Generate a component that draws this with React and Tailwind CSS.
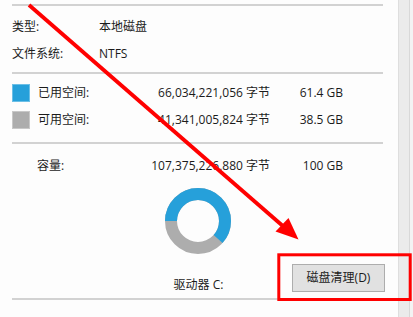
import React from "react";

const font = "font-['Open_Sans','Noto_Sans_CJK_SC',sans-serif]";

function Donut() {
  const r = 27;
  const c = 2 * Math.PI * r;
  const used = 0.614 * c;
  return (
    <svg width="66" height="66" viewBox="0 0 66 66">
      <circle cx="33" cy="33" r={r} fill="none" stroke="#adadad" strokeWidth="12" />
      <circle
        cx="33"
        cy="33"
        r={r}
        fill="none"
        stroke="#26a0da"
        strokeWidth="12"
        strokeDasharray={`${used} ${c}`}
        transform="rotate(180 33 33)"
      />
    </svg>
  );
}

function Sep() {
  return <div className="h-[2px] w-[371px] bg-[#d2d2d2]" />;
}

export default function App() {
  return (
    <div className={`relative w-[413px] h-[317px] overflow-hidden bg-[#fdfdfd] text-[12px] text-[#1b1b1b] ${font} flex`}>
      <div className="w-[398px] pl-[12px] pt-[4px] flex flex-col">
        <Sep />
        <div className="mt-[7px] h-[27px] flex items-center">
          <div className="w-[87px]">类型:</div>
          <div>本地磁盘</div>
        </div>
        <div className="h-[27px] flex items-center">
          <div className="w-[87px]">文件系统:</div>
          <div>NTFS</div>
        </div>
        <div className="mt-[5px]"><Sep /></div>
        <div className="mt-[5px] h-[27px] flex items-center">
          <div className="w-[18px] h-[18px] bg-[#26a0da] border border-[#6cbfe6]" />
          <div className="ml-[8px] w-[102px]">已用空间:</div>
          <div className="w-[130px] text-right whitespace-nowrap">66,034,221,056 字节</div>
          <div className="w-[73px] text-right whitespace-nowrap">61.4 GB</div>
        </div>
        <div className="h-[27px] flex items-center">
          <div className="w-[18px] h-[18px] bg-[#adadad] border border-[#c8c8c8]" />
          <div className="ml-[8px] w-[102px]">可用空间:</div>
          <div className="w-[130px] text-right whitespace-nowrap">41,341,005,824 字节</div>
          <div className="w-[73px] text-right whitespace-nowrap">38.5 GB</div>
        </div>
        <div className="mt-[9px]"><Sep /></div>
        <div className="mt-[8px] h-[27px] flex items-center">
          <div className="ml-[25px] w-[103px]">容量:</div>
          <div className="w-[130px] text-right whitespace-nowrap">107,375,226,880 字节</div>
          <div className="w-[73px] text-right whitespace-nowrap">100 GB</div>
        </div>
        <div className="mt-[9px] w-[371px] flex justify-center">
          <Donut />
        </div>
        <div className="mt-[10px] w-[373px] h-[28px] grid grid-cols-[1fr_auto_1fr]">
          <div />
          <div className="self-end h-[14px] leading-[14px] whitespace-nowrap">驱动器 C:</div>
          <div className="flex justify-end">
            <div className="w-[93px] h-[28px] bg-[#e1e1e1] border border-[#adadad] flex items-center justify-center">
              磁盘清理(D)
            </div>
          </div>
        </div>
        <div className="mt-[6px]"><Sep /></div>
      </div>
      <div className="flex-1 flex">
        <div className="w-[11px] bg-[#ebebeb] border-l border-[#dedede]" />
        <div className="w-px bg-[#d8d8d8]" />
        <div className="flex-1 bg-[#f3f3f3]" />
      </div>
      <svg className="absolute left-0 top-0 pointer-events-none" width="413" height="317" viewBox="0 0 413 317">
        <line x1="29" y1="5" x2="284" y2="227" stroke="#ff0000" strokeWidth="3.8" />
        <polygon points="298.5,239.5 275.5,231.5 288.5,218" fill="#ff0000" />
        <rect x="278.8" y="254.8" width="131.4" height="44.7" fill="none" stroke="#ff0000" strokeWidth="3" />
      </svg>
    </div>
  );
}
